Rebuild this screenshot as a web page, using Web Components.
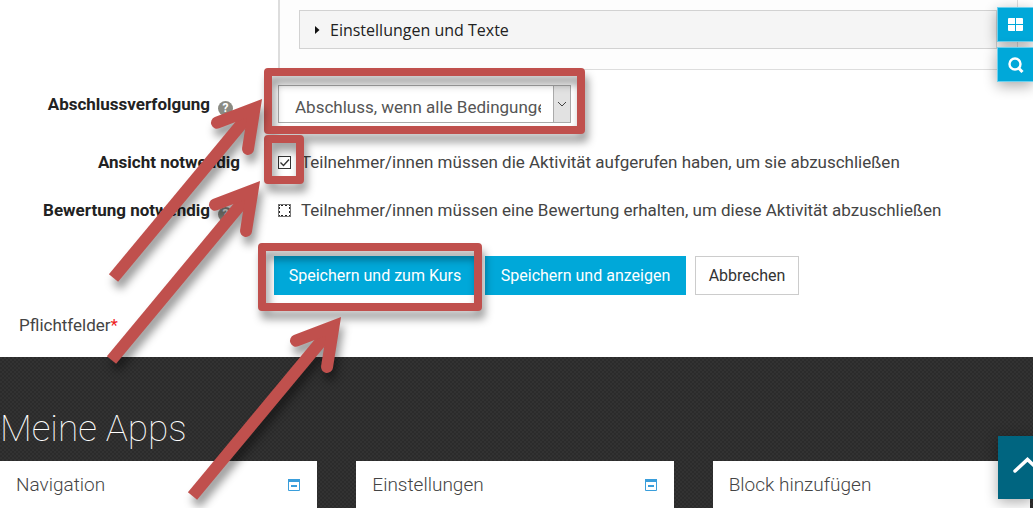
<!DOCTYPE html>
<html lang="de">
<head>
<meta charset="utf-8">
<title>Aktivitätsabschluss</title>
<style>
html, body { margin: 0; }
body { min-height: 100vh; display: flex; flex-direction: column; position: relative; overflow-x: hidden; background: #fff; color: #444; font: 17px/24px Roboto, "Liberation Sans", sans-serif; }
apps-footer { flex: 1; }
</style>
</head>
<body>
<settings-panel>Einstellungen und Texte</settings-panel>
<completion-form></completion-form>
<apps-footer>
  <span slot="title">Meine Apps</span>
  <app-card collapsible>Navigation</app-card>
  <app-card collapsible>Einstellungen</app-card>
  <app-card>Block hinzufügen</app-card>
</apps-footer>
<side-tools></side-tools>
<back-to-top></back-to-top>
<annotation-layer></annotation-layer>

<script>
function define(name, html) {
  const template = document.createElement('template');
  template.innerHTML = html;
  customElements.define(name, class extends HTMLElement {
    constructor() {
      super();
      this.attachShadow({ mode: 'open' }).append(template.content.cloneNode(true));
    }
  });
}

define('settings-panel', `
<style>
:host { display: block; margin: 0 15px 0 278px; padding: 10px 20px 20px 19px; border: solid #ddd; border-width: 0 1px 1px 2px; background: #fdfdfd; }
button { display: flex; align-items: center; gap: 10px; box-sizing: border-box; width: 100%; height: 39px; padding: 0 15px; border: 1px solid #d2d2d2; background: #f5f5f5; color: #222; font: 16px/24px "Open Sans", "Noto Sans", sans-serif; }
</style>
<button type="button" aria-expanded="false">
  <svg width="5" height="8" viewBox="0 0 5 8" aria-hidden="true"><path d="M0 0 4.500 4 0 8z" fill="#111"/></svg>
  <slot></slot>
</button>`);

define('help-icon', `
<style>
:host { display: block; width: 15px; height: 15px; }
button { display: grid; place-items: center; width: 15px; height: 15px; padding: 0; border: 0; border-radius: 50%; background: #8b8b83; color: #fff; font: bold 12px/15px Roboto, sans-serif; }
</style>
<button type="button" aria-label="Hilfe">?</button>`);

define('action-button', `
<style>
:host { display: block; }
button { box-sizing: border-box; width: 100%; height: 39px; padding: 0; border: 1px solid #00a8d9; background: #00a8d9; color: #fff; font: 16px/24px Roboto, "Liberation Sans", sans-serif; }
:host([plain]) button { border-color: #ccc; background: #fff; color: #333; }
</style>
<button type="button"><slot></slot></button>`);

define('completion-form', `
<style>
:host { display: block; }
form { padding: 14px 16px 20px 19px; }
.row { display: grid; grid-template-columns: 221px 1fr; column-gap: 38px; align-items: center; }
.name { display: flex; justify-content: flex-end; align-items: center; gap: 8px; font-weight: bold; color: #222; }
.name.help { padding-right: 7px; }
help-icon { margin-top: 8px; }
.completion { height: 40px; }
.view { height: 48px; margin-top: 14px; }
.grade { height: 48px; }
.select { display: flex; position: relative; width: 293px; height: 38px; }
select { appearance: none; box-sizing: border-box; width: 100%; height: 38px; padding: 6px 29px 0 16px; border: 1px solid #aaa; border-radius: 0; background: #fff; color: #555; font: inherit; }
.drop { position: absolute; right: 0; top: 0; box-sizing: border-box; width: 18px; height: 38px; border: 1px solid #aaa; background: #e2e2e2; pointer-events: none; }
.option { display: flex; align-items: center; gap: 10px; }
input { appearance: none; box-sizing: border-box; width: 13px; height: 13px; margin: 0; border: 1px solid #333; background: #fff; }
.grade input { border: 2px dotted #222; outline: 1px solid #777; outline-offset: -1px; }
input:checked { background: #fff url("data:image/svg+xml,%3Csvg xmlns='http://www.w3.org/2000/svg' viewBox='0 0 11 11'%3E%3Cpath d='M1.500 5.500 4.500 8.500 10 2.500' fill='none' stroke='%23333' stroke-width='1.400'/%3E%3C/svg%3E") center / 11px 11px no-repeat; }
.actions { display: grid; grid-template-columns: 202px 201px 104px; column-gap: 9px; margin: 22px 0 0 255px; }
.required { margin: 18px 0 0; }
.required span { color: #e22; }
</style>
<form>
  <div class="row completion">
    <div class="name help"><label for="completion">Abschlussverfolgung</label><help-icon></help-icon></div>
    <div class="select">
      <select id="completion"><option>Abschluss, wenn alle Bedingungen erfüllt sind</option></select>
      <span class="drop"><svg width="16" height="36" viewBox="0 0 16 36" aria-hidden="true"><path d="m4 16 4 4 4-4" fill="none" stroke="#444"/></svg></span>
    </div>
  </div>
  <div class="row view">
    <div class="name"><label for="view">Ansicht notwendig</label></div>
    <div class="option"><input id="view" type="checkbox" checked><label for="view">Teilnehmer/innen müssen die Aktivität aufgerufen haben, um sie abzuschließen</label></div>
  </div>
  <div class="row grade">
    <div class="name help"><label for="grade">Bewertung notwendig</label><help-icon></help-icon></div>
    <div class="option"><input id="grade" type="checkbox"><label for="grade">Teilnehmer/innen müssen eine Bewertung erhalten, um diese Aktivität abzuschließen</label></div>
  </div>
  <div class="actions">
    <action-button>Speichern und zum Kurs</action-button>
    <action-button>Speichern und anzeigen</action-button>
    <action-button plain>Abbrechen</action-button>
  </div>
  <p class="required">Pflichtfelder<span>*</span></p>
</form>`);

define('app-card', `
<style>
:host { display: flex; justify-content: space-between; align-items: center; box-sizing: border-box; min-height: 47px; padding: 0 16px; background: #fff; color: #444; }
h3 { margin: 0; font: 300 19px/24px Roboto, sans-serif; }
button { display: none; width: 14px; height: 14px; padding: 0; border: 0; background: none; }
:host([collapsible]) button { display: block; }
svg { display: block; }
</style>
<h3><slot></slot></h3>
<button type="button" aria-label="Einklappen"><svg width="14" height="14" viewBox="0 0 14 14"><path d="M1.500 2h11v10.500h-11z" fill="none" stroke="#3a9edb"/><path d="M1 1h12v3H1zM4 7h6v2H4z" fill="#3a9edb"/></svg></button>`);

define('apps-footer', `
<style>
:host { display: block; padding: 48px 3px 0 0; background: conic-gradient(#2b2b2b 25%, #323232 0 50%, #2b2b2b 0 75%, #323232 0) 0 0 / 4px 4px; color: #fff; }
h2 { margin: 0; font: 100 37px/48px Roboto, sans-serif; }
.cards { display: grid; grid-template-columns: repeat(3, 1fr); gap: 39px; margin-top: 8px; }
</style>
<h2><slot name="title"></slot></h2>
<div class="cards"><slot></slot></div>`);

define('side-tools', `
<style>
:host { position: fixed; right: 0; top: 7px; display: grid; gap: 5px; }
button { display: grid; place-items: center; width: 36px; height: 35px; padding: 0; border: 1px solid #6cd0ee; border-right: 0; background: #00a8d9; box-shadow: 0 4px 14px #0005; }
</style>
<button type="button" aria-label="Apps"><svg width="16" height="14" viewBox="0 0 16 14"><path d="M0 1q0-1 1-1h6v6H0zM8 0h6q1 0 1 1v5H8zM0 7h7v6H1q-1 0-1-1zM8 7h7v5q0 1-1 1H8z" fill="#fff"/></svg></button>
<button type="button" aria-label="Suche"><svg width="16" height="16" viewBox="0 0 16 16" fill="none" stroke="#fff"><circle cx="7" cy="7" r="5.500" stroke-width="2.400"/><path d="m10.500 11 4 4" stroke-width="3"/></svg></button>`);

define('back-to-top', `
<style>
:host { position: fixed; right: 0; bottom: 9px; }
a { display: block; width: 35px; height: 63px; background: #006580; box-shadow: 0 3px 14px #0005; }
svg { display: block; }
</style>
<a href="#" aria-label="Nach oben"><svg width="35" height="63" viewBox="0 0 35 63"><path d="M17 35 29.500 23.500 42 35" fill="none" stroke="#fff" stroke-width="3.500" stroke-linecap="round"/></svg></a>`);

define('annotation-layer', `
<style>
:host { position: absolute; left: 0; top: 0; pointer-events: none; }
svg { display: block; }
.mark { filter: drop-shadow(3px 8px 4px #0006); }
</style>
<svg width="600" height="508" viewBox="0 0 600 508" fill="none" stroke="#c0504d" aria-hidden="true">
  <defs>
    <g id="arrow" stroke-width="12">
      <path d="M-148.500 179-7.500 9.300"/>
      <path d="M-45 23.700-7.500 9.300-14 50" stroke-linecap="round" stroke-miterlimit="10"/>
    </g>
  </defs>
  <g class="mark" stroke-width="8" stroke-linejoin="round">
    <rect x="268" y="72" width="313" height="58"/>
    <rect x="268" y="139" width="32" height="41"/>
    <rect x="262" y="247" width="216" height="60"/>
  </g>
  <g class="mark">
    <use href="#arrow" x="262" y="99"/>
    <use href="#arrow" x="260" y="181"/>
    <use href="#arrow" x="341" y="317"/>
  </g>
</svg>`);
</script>
</body>
</html>
